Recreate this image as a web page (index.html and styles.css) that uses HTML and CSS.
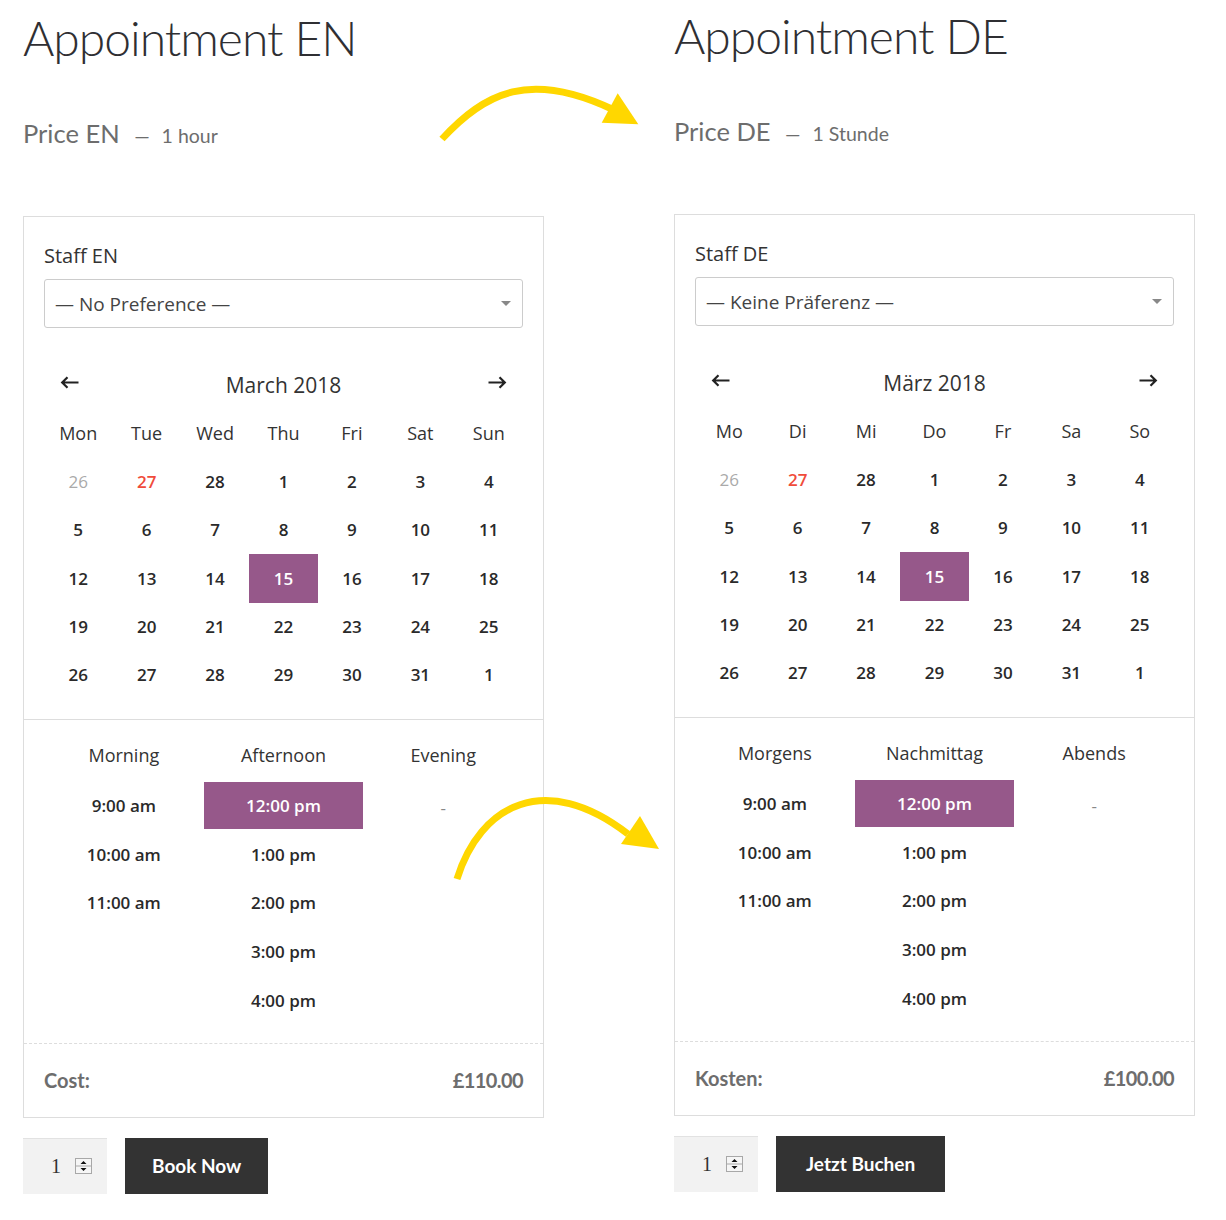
FILE: index.html
```html
<!DOCTYPE html>
<html lang="en">
<head>
<meta charset="utf-8">
<title>Appointments</title>
<link rel="stylesheet" href="styles.css">
</head>
<body>
<div class="page">
  <section class="product product-en">
    <h1 class="title">Appointment EN</h1>
    <p class="price">Price EN <span class="dur"><span class="dash">—</span> 1 hour</span></p>
    <div class="card">
      <div class="card-top">
        <div class="label">Staff EN</div>
        <div class="select"><span>— No Preference —</span><i class="caret"></i></div>
        <div class="cal">
          <div class="cal-head">
            <svg class="nav" width="19" height="13" viewBox="0 0 19 13"><path d="M18.5 6.5H2M7.5 1.2L2.2 6.5l5.3 5.3" fill="none" stroke="#222" stroke-width="2.2"/></svg>
            <span class="month">March 2018</span>
            <svg class="nav" width="19" height="13" viewBox="0 0 19 13"><path d="M0.5 6.5H17M11.5 1.2l5.3 5.3-5.3 5.3" fill="none" stroke="#222" stroke-width="2.2"/></svg>
          </div>
          <div class="grid">
            <span class="dn">Mon</span><span class="dn">Tue</span><span class="dn">Wed</span><span class="dn">Thu</span><span class="dn">Fri</span><span class="dn">Sat</span><span class="dn">Sun</span>
            <span class="d past">26</span><span class="d today">27</span><span class="d">28</span><span class="d">1</span><span class="d">2</span><span class="d">3</span><span class="d">4</span>
            <span class="d">5</span><span class="d">6</span><span class="d">7</span><span class="d">8</span><span class="d">9</span><span class="d">10</span><span class="d">11</span>
            <span class="d">12</span><span class="d">13</span><span class="d">14</span><span class="d sel">15</span><span class="d">16</span><span class="d">17</span><span class="d">18</span>
            <span class="d">19</span><span class="d">20</span><span class="d">21</span><span class="d">22</span><span class="d">23</span><span class="d">24</span><span class="d">25</span>
            <span class="d">26</span><span class="d">27</span><span class="d">28</span><span class="d">29</span><span class="d">30</span><span class="d">31</span><span class="d">1</span>
          </div>
        </div>
      </div>
      <div class="times">
        <div class="tcol">
          <div class="th">Morning</div>
          <div class="slot">9:00 am</div>
          <div class="slot">10:00 am</div>
          <div class="slot">11:00 am</div>
        </div>
        <div class="tcol">
          <div class="th">Afternoon</div>
          <div class="slot sel">12:00 pm</div>
          <div class="slot">1:00 pm</div>
          <div class="slot">2:00 pm</div>
          <div class="slot">3:00 pm</div>
          <div class="slot">4:00 pm</div>
        </div>
        <div class="tcol">
          <div class="th">Evening</div>
          <div class="slot none">-</div>
        </div>
      </div>
      <div class="cost"><span>Cost:</span><span class="amount">£110.00</span></div>
    </div>
    <div class="buy">
      <div class="qty"><span class="qn">1</span><svg class="spin" width="17" height="16" viewBox="0 0 17 16"><rect x="0.5" y="0.5" width="16" height="15" fill="#f6f6f6" stroke="#a8a8a8"/><line x1="1" y1="8" x2="16" y2="8" stroke="#a8a8a8"/><path d="M5.5 6h6L8.5 3z M5.5 10h6L8.5 13z" fill="#111"/></svg></div>
      <button class="btn">Book Now</button>
    </div>
  </section>

  <section class="product product-de">
    <h1 class="title">Appointment DE</h1>
    <p class="price">Price DE <span class="dur"><span class="dash">—</span> 1 Stunde</span></p>
    <div class="card">
      <div class="card-top">
        <div class="label">Staff DE</div>
        <div class="select"><span>— Keine Präferenz —</span><i class="caret"></i></div>
        <div class="cal">
          <div class="cal-head">
            <svg class="nav" width="19" height="13" viewBox="0 0 19 13"><path d="M18.5 6.5H2M7.5 1.2L2.2 6.5l5.3 5.3" fill="none" stroke="#222" stroke-width="2.2"/></svg>
            <span class="month">März 2018</span>
            <svg class="nav" width="19" height="13" viewBox="0 0 19 13"><path d="M0.5 6.5H17M11.5 1.2l5.3 5.3-5.3 5.3" fill="none" stroke="#222" stroke-width="2.2"/></svg>
          </div>
          <div class="grid">
            <span class="dn">Mo</span><span class="dn">Di</span><span class="dn">Mi</span><span class="dn">Do</span><span class="dn">Fr</span><span class="dn">Sa</span><span class="dn">So</span>
            <span class="d past">26</span><span class="d today">27</span><span class="d">28</span><span class="d">1</span><span class="d">2</span><span class="d">3</span><span class="d">4</span>
            <span class="d">5</span><span class="d">6</span><span class="d">7</span><span class="d">8</span><span class="d">9</span><span class="d">10</span><span class="d">11</span>
            <span class="d">12</span><span class="d">13</span><span class="d">14</span><span class="d sel">15</span><span class="d">16</span><span class="d">17</span><span class="d">18</span>
            <span class="d">19</span><span class="d">20</span><span class="d">21</span><span class="d">22</span><span class="d">23</span><span class="d">24</span><span class="d">25</span>
            <span class="d">26</span><span class="d">27</span><span class="d">28</span><span class="d">29</span><span class="d">30</span><span class="d">31</span><span class="d">1</span>
          </div>
        </div>
      </div>
      <div class="times">
        <div class="tcol">
          <div class="th">Morgens</div>
          <div class="slot">9:00 am</div>
          <div class="slot">10:00 am</div>
          <div class="slot">11:00 am</div>
        </div>
        <div class="tcol">
          <div class="th">Nachmittag</div>
          <div class="slot sel">12:00 pm</div>
          <div class="slot">1:00 pm</div>
          <div class="slot">2:00 pm</div>
          <div class="slot">3:00 pm</div>
          <div class="slot">4:00 pm</div>
        </div>
        <div class="tcol">
          <div class="th">Abends</div>
          <div class="slot none">-</div>
        </div>
      </div>
      <div class="cost"><span>Kosten:</span><span class="amount">£100.00</span></div>
    </div>
    <div class="buy">
      <div class="qty"><span class="qn">1</span><svg class="spin" width="17" height="16" viewBox="0 0 17 16"><rect x="0.5" y="0.5" width="16" height="15" fill="#f6f6f6" stroke="#a8a8a8"/><line x1="1" y1="8" x2="16" y2="8" stroke="#a8a8a8"/><path d="M5.5 6h6L8.5 3z M5.5 10h6L8.5 13z" fill="#111"/></svg></div>
      <button class="btn btn-wide">Jetzt Buchen</button>
    </div>
  </section>

  <svg class="arrows" width="1226" height="1220" viewBox="0 0 1226 1220">
    <path d="M442 139C485 92 530 70 614 110" fill="none" stroke="#ffd700" stroke-width="7"/>
    <polygon points="617.7,93.3 601.7,122.7 638.3,124.3" fill="#ffd700"/>
    <path d="M457 879C480 805 545 770 628 834" fill="none" stroke="#ffd700" stroke-width="7"/>
    <polygon points="640,816 621,844 659,849" fill="#ffd700"/>
  </svg>
</div>
</body>
</html>
```

FILE: styles.css
```css
html, body {
  margin: 0;
  padding: 0;
  background: #fff;
}

.page {
  position: relative;
  display: grid;
  grid-template-columns: 521px 521px;
  column-gap: 130px;
  padding-left: 23px;
  width: 1226px;
  height: 1220px;
  box-sizing: border-box;
  font-family: "Open Sans", "Noto Sans", sans-serif;
  color: #333;
}

.product-en { padding-top: 2px; }

.title {
  margin: 6px 0 0;
  font-family: Lato, sans-serif;
  font-weight: 300;
  font-size: 48px;
  line-height: 60px;
  color: #2f2f33;
  letter-spacing: -1px;
}

.price {
  margin: 50px 0 0;
  font-family: Lato, sans-serif;
  font-size: 25.5px;
  line-height: 30px;
  color: #6d6d6d;
}

.dur {
  font-size: 19.5px;
  margin-left: 8px;
}

.dash { margin-right: 7px; }

.card {
  margin-top: 65px;
  border: 1px solid #ddd;
}

.card-top {
  padding: 25px 20px 20px;
  border-bottom: 1px solid #ddd;
}

.label {
  font-size: 20px;
  line-height: 28px;
  color: #333;
}

.select {
  margin-top: 9px;
  height: 49px;
  box-sizing: border-box;
  border: 1px solid #ccc;
  border-radius: 3px;
  display: flex;
  align-items: center;
  justify-content: space-between;
  padding: 0 11px 0 10px;
  font-size: 19px;
  color: #444;
}

.caret {
  width: 0;
  height: 0;
  border-left: 5px solid transparent;
  border-right: 5px solid transparent;
  border-top: 5px solid #888;
}

.cal { margin-top: 30px; }

.cal-head {
  height: 51px;
  display: flex;
  align-items: center;
  justify-content: space-between;
  padding: 0 16px;
}

.nav { margin-top: -3px; }

.month {
  font-size: 21px;
  color: #333;
  margin-top: 3px;
}

.grid {
  display: grid;
  grid-template-columns: repeat(7, 1fr);
  grid-auto-rows: 48.3px;
}

.grid span {
  display: flex;
  align-items: center;
  justify-content: center;
}

.dn {
  font-size: 18px;
  color: #333;
}

.d {
  font-size: 17px;
  font-weight: 600;
  color: #2a2a2a;
}

.d.past { color: #aaa; font-weight: 400; }
.d.today { color: #f04c3b; }
.d.sel {
  background: #96588a;
  color: #fff;
  height: 49px;
}

.times {
  display: grid;
  grid-template-columns: repeat(3, 1fr);
  padding: 23px 20px 17px;
}

.tcol {
  display: flex;
  flex-direction: column;
}

.th {
  height: 24px;
  line-height: 24px;
  text-align: center;
  font-size: 18px;
  color: #333;
  margin-bottom: 15px;
}

.slot {
  height: 47px;
  margin-bottom: 1.75px;
  display: flex;
  align-items: center;
  justify-content: center;
  font-size: 17px;
  font-weight: 600;
  color: #2a2a2a;
}

.slot.sel {
  background: #96588a;
  color: #fff;
}

.slot.none {
  font-weight: 400;
  color: #888;
  padding-top: 4px;
  box-sizing: border-box;
}

.cost {
  height: 73px;
  border-top: 1px dashed #ddd;
  padding: 0 20px;
  display: flex;
  align-items: center;
  justify-content: space-between;
  font-family: Lato, sans-serif;
  font-size: 20px;
  font-weight: 700;
  color: #6d6d6d;
}

.amount { letter-spacing: -0.6px; }

.buy {
  margin-top: 20px;
  display: flex;
  gap: 18px;
}

.qty {
  width: 84px;
  height: 56px;
  box-sizing: border-box;
  background: #f2f2f2;
  border-top: 1px solid #e2e2e2;
  display: flex;
  align-items: center;
  padding-left: 28px;
  gap: 14px;
}

.qn {
  font-family: "Liberation Serif", serif;
  font-size: 20px;
  color: #333;
}

.btn {
  height: 56px;
  padding: 0 27px;
  border: 0;
  border-radius: 0;
  background: #333;
  color: #fff;
  font-family: Lato, sans-serif;
  font-weight: 700;
  font-size: 19px;
}

.btn-wide { padding: 0 30px; }

.arrows {
  position: absolute;
  left: 0;
  top: 0;
  pointer-events: none;
}
```
